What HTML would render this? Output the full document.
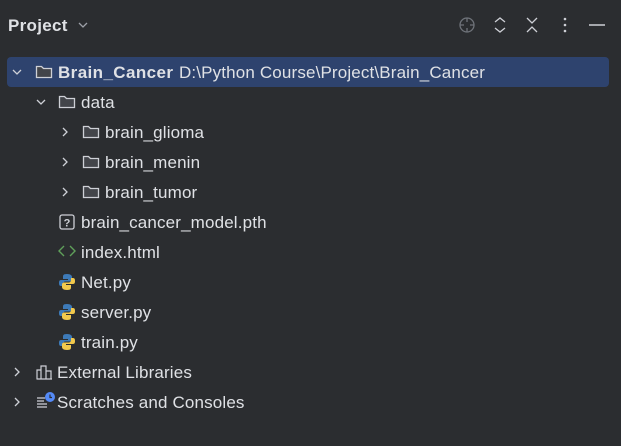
<!DOCTYPE html>
<html><head><meta charset="utf-8"><style>
body{margin:0;width:621px;height:446px;background:#2b2d30;font-family:"Liberation Sans",sans-serif;color:#dfe1e5;overflow:hidden;position:relative}
.t{position:absolute;font-size:17px;line-height:20px;white-space:nowrap;letter-spacing:0.15px}
svg{position:absolute;overflow:visible}
</style></head><body>
<div class="t" style="left:8px;top:16px;font-size:17px;font-weight:bold;letter-spacing:0.3px">Project</div>
<svg style="left:78px;top:21px" width="10" height="8"><path d="M1 2 L5 6 L9 2" stroke="#9da0a8" stroke-width="1.3" fill="none"/></svg>
<svg style="left:458px;top:16px" width="18" height="18"><circle cx="9" cy="9" r="7" stroke="#6f737a" stroke-width="1.3" fill="none"/><path d="M9 2v4M9 12v4M2 9h4M12 9h4" stroke="#6f737a" stroke-width="1.3"/></svg>
<svg style="left:494px;top:17px" width="12" height="16"><path d="M1 5L6 1L11 5M1 11L6 15L11 11" stroke="#ced0d6" stroke-width="1.3" fill="none"/></svg>
<svg style="left:526px;top:17px" width="12" height="16"><path d="M1 1L6 6L11 1M1 15L6 10L11 15" stroke="#ced0d6" stroke-width="1.3" fill="none"/></svg>
<svg style="left:563px;top:17px" width="4" height="16"><circle cx="2" cy="2" r="1.3" fill="#ced0d6"/><circle cx="2" cy="8" r="1.3" fill="#ced0d6"/><circle cx="2" cy="14" r="1.3" fill="#ced0d6"/></svg>
<svg style="left:589px;top:24px" width="16" height="2"><path d="M0 1H16" stroke="#ced0d6" stroke-width="1.5"/></svg>
<div style="position:absolute;left:7px;top:57px;width:602px;height:30px;background:#2e436e;border-radius:4px"></div>
<svg style="left:12px;top:68px" width="10" height="8"><path d="M1 2L5 6L9 2" stroke="#ced0d6" stroke-width="1.3" fill="none"/></svg>
<svg style="left:35px;top:64px" width="18" height="16"><path d="M1.5 2.5h5l2 2h8v9h-15z" stroke="#ced0d6" stroke-width="1.3" fill="#43454a"/></svg>
<div class="t" style="left:58px;top:63px;font-weight:bold;letter-spacing:0.4px">Brain_Cancer</div>
<div class="t" style="left:179px;top:63px">D:\Python Course\Project\Brain_Cancer</div>
<svg style="left:36px;top:98px" width="10" height="8"><path d="M1 2L5 6L9 2" stroke="#ced0d6" stroke-width="1.3" fill="none"/></svg>
<svg style="left:58px;top:94px" width="18" height="16"><path d="M1.5 2.5h5l2 2h8v9h-15z" stroke="#ced0d6" stroke-width="1.3" fill="#43454a"/></svg>
<div class="t" style="left:81px;top:93px">data</div>
<svg style="left:61px;top:127px" width="8" height="10"><path d="M2 1L6 5L2 9" stroke="#ced0d6" stroke-width="1.3" fill="none"/></svg>
<svg style="left:82px;top:124px" width="18" height="16"><path d="M1.5 2.5h5l2 2h8v9h-15z" stroke="#ced0d6" stroke-width="1.3" fill="#43454a"/></svg>
<div class="t" style="left:105px;top:123px">brain_glioma</div>
<svg style="left:61px;top:157px" width="8" height="10"><path d="M2 1L6 5L2 9" stroke="#ced0d6" stroke-width="1.3" fill="none"/></svg>
<svg style="left:82px;top:154px" width="18" height="16"><path d="M1.5 2.5h5l2 2h8v9h-15z" stroke="#ced0d6" stroke-width="1.3" fill="#43454a"/></svg>
<div class="t" style="left:105px;top:153px">brain_menin</div>
<svg style="left:61px;top:187px" width="8" height="10"><path d="M2 1L6 5L2 9" stroke="#ced0d6" stroke-width="1.3" fill="none"/></svg>
<svg style="left:82px;top:184px" width="18" height="16"><path d="M1.5 2.5h5l2 2h8v9h-15z" stroke="#ced0d6" stroke-width="1.3" fill="#43454a"/></svg>
<div class="t" style="left:105px;top:183px">brain_tumor</div>
<svg style="left:59px;top:214px" width="16" height="16"><rect x="1" y="1" width="14" height="14" rx="2" stroke="#ced0d6" stroke-width="1.3" fill="none"/><text x="8" y="12.5" font-size="11" font-family="Liberation Sans" fill="#ced0d6" text-anchor="middle" font-weight="bold">?</text></svg>
<div class="t" style="left:81px;top:213px">brain_cancer_model.pth</div>
<svg style="left:58px;top:245px" width="18" height="12"><path d="M6 1L1 6L6 11M12 1L17 6L12 11" stroke="#5fa05a" stroke-width="1.4" fill="none"/></svg>
<div class="t" style="left:81px;top:243px">index.html</div>
<svg style="left:58px;top:273px" width="18" height="18"><path d="M9 1C5 1 5 2.5 5 4v2h5v1H3C1 7 1 9 1 10s0 3 2 3h2v-2c0-1.5 1-2.5 2.5-2.5H12c1.2 0 2-1 2-2V4c0-1.5-1.5-3-5-3z" fill="#3d7ab8"/><path d="M9 17c4 0 4-1.5 4-3v-2H8v-1h7c2 0 2-2 2-3s0-3-2-3h-2v2c0 1.5-1 2.5-2.5 2.5H6c-1.2 0-2 1-2 2V14c0 1.5 1.5 3 5 3z" fill="#f2c94c"/></svg>
<div class="t" style="left:81px;top:273px">Net.py</div>
<svg style="left:58px;top:303px" width="18" height="18"><path d="M9 1C5 1 5 2.5 5 4v2h5v1H3C1 7 1 9 1 10s0 3 2 3h2v-2c0-1.5 1-2.5 2.5-2.5H12c1.2 0 2-1 2-2V4c0-1.5-1.5-3-5-3z" fill="#3d7ab8"/><path d="M9 17c4 0 4-1.5 4-3v-2H8v-1h7c2 0 2-2 2-3s0-3-2-3h-2v2c0 1.5-1 2.5-2.5 2.5H6c-1.2 0-2 1-2 2V14c0 1.5 1.5 3 5 3z" fill="#f2c94c"/></svg>
<div class="t" style="left:81px;top:303px">server.py</div>
<svg style="left:58px;top:333px" width="18" height="18"><path d="M9 1C5 1 5 2.5 5 4v2h5v1H3C1 7 1 9 1 10s0 3 2 3h2v-2c0-1.5 1-2.5 2.5-2.5H12c1.2 0 2-1 2-2V4c0-1.5-1.5-3-5-3z" fill="#3d7ab8"/><path d="M9 17c4 0 4-1.5 4-3v-2H8v-1h7c2 0 2-2 2-3s0-3-2-3h-2v2c0 1.5-1 2.5-2.5 2.5H6c-1.2 0-2 1-2 2V14c0 1.5 1.5 3 5 3z" fill="#f2c94c"/></svg>
<div class="t" style="left:81px;top:333px">train.py</div>
<svg style="left:13px;top:367px" width="8" height="10"><path d="M2 1L6 5L2 9" stroke="#ced0d6" stroke-width="1.3" fill="none"/></svg>
<svg style="left:36px;top:364px" width="18" height="16"><path d="M1 15V6h4v9M5 15V2h5v13M10 15V7h5v8zM0.5 15H16" stroke="#ced0d6" stroke-width="1.2" fill="none"/></svg>
<div class="t" style="left:57px;top:363px">External Libraries</div>
<svg style="left:13px;top:397px" width="8" height="10"><path d="M2 1L6 5L2 9" stroke="#ced0d6" stroke-width="1.3" fill="none"/></svg>
<svg style="left:36px;top:391px" width="20" height="20"><path d="M1 7h8M1 10h7M1 13h10M1 16h10" stroke="#ced0d6" stroke-width="1.2"/><circle cx="14" cy="6" r="5" fill="#548af7"/><path d="M14 3.5V6.5h2" stroke="#2b2d30" stroke-width="1.2" fill="none"/></svg>
<div class="t" style="left:57px;top:393px">Scratches and Consoles</div>
</body></html>
